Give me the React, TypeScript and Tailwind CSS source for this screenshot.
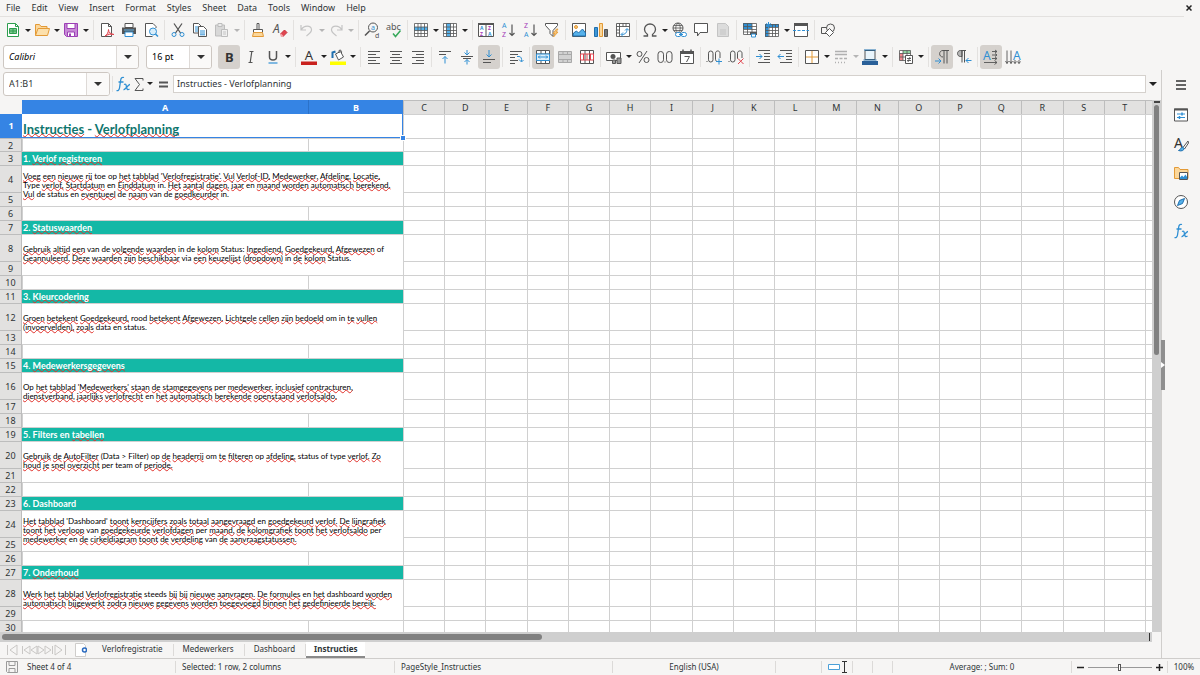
import React, { useState } from 'react';
import clsx from 'clsx';

const INK = '#555';
const BLUE = '#2f8fd3';

// All toolbar glyphs share a 16x16 canvas
const ICONS: Record<string, React.ReactNode> = {
  newDoc: (
    <>
      <path d="M2.5 1.5h8l3 3v10h-11z" fill="#fff" stroke="#2e9e4f" />
      <path d="M10.5 1.5v3h3" stroke="#2e9e4f" />
      <path d="M4.5 6.5h7v5h-7zM4.5 9h7M8 6.5v5" fill="#7cc98f" stroke="#2e9e4f" />
    </>
  ),
  open: (
    <>
      <path d="M1.5 13.5v-11h4l1.5 2h6v2" fill="#fbd79b" stroke="#e39a36" />
      <path d="M1.5 13.5l2.5-7h11.5l-2 7z" fill="#fce0ac" stroke="#e39a36" />
    </>
  ),
  save: (
    <>
      <path d="M1.5 1.5h13v13h-11l-2-2z" fill="#c78ad6" stroke="#9c3fb5" />
      <path d="M4 1.5h8v5H4z" fill="#fff" stroke="#9c3fb5" />
      <path d="M4.5 10h7v4.5h-7z" fill="#fff" stroke="#9c3fb5" />
      <path d="M6 11.5h2v3H6z" fill="#9c3fb5" />
    </>
  ),
  pdf: (
    <>
      <path d="M2.5 1.5h7l3 3v10h-10z" fill="#fff" stroke={INK} />
      <path d="M9.5 1.5v3h3" stroke={INK} />
      <path d="M6 14c2-1 3.5-4 3.5-6.5 0 3 2.500 5 5.500 5-3-1-6 0-9 1.500z" fill="#f6c5c8" stroke="#e0454f" />
    </>
  ),
  print: (
    <>
      <path d="M4 1.500h8v4H4z" fill="#fff" stroke={INK} />
      <path d="M1 5.500h14v6.500H1z" fill={INK} />
      <path d="M3 8h10" stroke="#5fb3ea" />
      <path d="M4 10h8v4.500H4z" fill="#fff" stroke={BLUE} />
    </>
  ),
  preview: (
    <>
      <path d="M13 6V4.500l-3-3H2.500v13h7" fill="#fff" stroke={INK} />
      <circle cx="10" cy="9.500" r="3.500" fill="#d8edfa" stroke={BLUE} />
      <path d="M12.500 12l2.500 2.500" stroke={BLUE} strokeWidth="1.500" />
    </>
  ),
  cut: (
    <>
      <path d="M4 1.500l6.500 9.500M12 1.500L5.500 11" stroke={INK} strokeWidth="1.300" />
      <circle cx="4" cy="12.500" r="2" stroke={BLUE} />
      <circle cx="12" cy="12.500" r="2" stroke={BLUE} />
    </>
  ),
  copy: (
    <>
      <path d="M1.500 1.500h5l2.500 2.500v7h-7.500z" fill="#fff" stroke={INK} />
      <path d="M3 5h3M3 7h3M3 9h3" stroke={BLUE} />
      <path d="M6.500 4.500h5l3 3v7h-8z" fill="#fff" stroke={INK} />
      <path d="M8 9h5M8 11h5M8 12.800h5" stroke={BLUE} />
    </>
  ),
  paste: (
    <>
      <path d="M1.500 3h9v11h-9z" fill="#d8d8d8" stroke="#bdbdbd" />
      <path d="M4 1.500h4v3H4z" fill="#ececec" stroke="#bdbdbd" />
      <path d="M7.500 7.500h6v7h-6z" fill="#f0f0f0" stroke="#bdbdbd" />
      <path d="M9 10h3M9 12h3" stroke="#c4c4c4" />
    </>
  ),
  clone: (
    <>
      <path d="M7 1.500h2v6H7z" fill="#fff" stroke={INK} />
      <path d="M3.500 7.500h9v3h-9z" fill="#fff" stroke={INK} />
      <path d="M3.500 10.500h9l1 4h-11z" fill="#fbd79b" stroke="#e39a36" />
    </>
  ),
  clear: (
    <>
      <text x="1" y="11" fontSize="12" fontStyle="italic" fill={INK} stroke="none">A</text>
      <path d="M8.500 12l4-4 2.500 2.500-4 4z" fill="#e0454f" stroke="#c9303b" />
      <path d="M8 12.500l1-1 2.500 2.500-1 1H9z" fill="#f5a6ab" />
    </>
  ),
  undo: <path d="M2 3v5h5M2.500 7.500C5 3 12 3 12.500 7.500c.3 3-3 4.500-5 6.500" stroke="#c4c4c4" strokeWidth="1.200" />,
  redo: <path d="M14 3v5H9M13.500 7.500C11 3 4 3 3.500 7.500c-.3 3 3 4.500 5 6.500" stroke="#c4c4c4" strokeWidth="1.200" />,
  find: (
    <>
      <circle cx="9" cy="5.500" r="4.500" stroke={INK} />
      <path d="M5.500 9L1 13.500" stroke={INK} strokeWidth="1.600" />
      <text x="7" y="8" fontSize="7" fill={BLUE} stroke="none">a</text>
      <text x="11" y="15.500" fontSize="7" fill={INK} stroke="none">d</text>
    </>
  ),
  spell: (
    <>
      <text x="0" y="8" fontSize="9" fill={INK} stroke="none">abc</text>
      <path d="M7 11.500l2.500 3 5-6" stroke="#37a95b" strokeWidth="1.500" />
    </>
  ),
  rowIns: (
    <>
      <path d="M1.500 1.500h13v13h-13z" fill="#fff" />
      <path d="M1 5h14v3.500H1z" fill="#56b1ea" />
      <path d="M1.500 1.500h13v13h-13zM1.500 5h13M1.500 8.500h13M1.500 11.500h13M5 1.500v13M8 1.500v13M11.500 1.500v13" stroke={INK} strokeWidth=".8" />
    </>
  ),
  colIns: (
    <>
      <path d="M1.500 1.500h13v13h-13z" fill="#fff" />
      <path d="M4.500 1h4v14h-4z" fill="#56b1ea" />
      <path d="M1.500 1.500h13v13h-13zM1.500 5h13M1.500 8.500h13M1.500 11.500h13M4.500 1.500v13M8.500 1.500v13M11.500 1.500v13" stroke={INK} strokeWidth=".8" />
    </>
  ),
  sort: (
    <>
      <path d="M.5 1.500h15v13H.5zM8 2v12" fill="#fff" stroke={INK} />
      <path d="M0 1h16v2H0z" fill={INK} />
      <text x="2" y="8" fontSize="5" fontWeight="700" fill={BLUE} stroke="none">A</text>
      <text x="2" y="14" fontSize="5" fontWeight="700" fill="#a33bb8" stroke="none">Z</text>
      <text x="10" y="8" fontSize="5" fontWeight="700" fill="#a33bb8" stroke="none">Z</text>
      <text x="10" y="14" fontSize="5" fontWeight="700" fill={BLUE} stroke="none">A</text>
    </>
  ),
  sortAsc: (
    <>
      <text x="2" y="6" fontSize="7" fill={BLUE} stroke="none">A</text>
      <text x="2" y="15" fontSize="7" fill="#a33bb8" stroke="none">Z</text>
      <path d="M12 2.500v11M9.500 11l2.500 2.500 2.500-2.500" stroke={INK} strokeWidth="1.200" />
    </>
  ),
  sortDesc: (
    <>
      <text x="2" y="6" fontSize="7" fill="#a33bb8" stroke="none">Z</text>
      <text x="2" y="15" fontSize="7" fill={BLUE} stroke="none">A</text>
      <path d="M12 2.500v11M9.500 11l2.500 2.500 2.500-2.500" stroke={INK} strokeWidth="1.200" />
    </>
  ),
  filter: (
    <>
      <path d="M1.500 1.500h12v2L9 8.500v6l-3-3v-3l-4.500-5z" fill="#fff" stroke={INK} />
      <path d="M12.500 7L9 11.500h2L9.500 15l4.500-5h-2l2-3z" fill="#fbc77a" stroke="#e39a36" strokeWidth=".8" />
    </>
  ),
  image: (
    <>
      <path d="M1.500 1.500h13v13h-13z" fill="#fff" stroke={INK} />
      <circle cx="5" cy="5" r="1.500" fill="#fbc77a" stroke="#e39a36" />
      <path d="M2 14l.5-3 3-2 2 2 4-4 3 4v3z" fill="#56b1ea" stroke="#1f6fae" />
    </>
  ),
  chart: (
    <>
      <path d="M1.500 5.500h3v9h-3z" fill="#3f97d6" stroke="#1f6fae" />
      <path d="M6.500 1.500h3v13h-3z" fill="#fbd79b" stroke="#e39a36" />
      <path d="M11.500 7.500h3v7h-3z" fill="#777" stroke={INK} />
    </>
  ),
  pivot: (
    <>
      <path d="M1.500 1.500h13v13h-13zM1.500 4.500h13M4.500 1.500v13M4.500 8H1.500M1.500 11h3M8 1.500v3M11 1.500v3" fill="#fff" stroke={INK} strokeWidth=".9" />
      <path d="M6.500 12.500c4 0 5.500-2 5.500-5.500M10 8.500L12 6.500l2 2M8 10.500l-2 2 2 2" stroke={BLUE} />
    </>
  ),
  omega: <path d="M1.500 14h4v-1.500C3.500 11 2.500 9.500 2.500 7.500 2.500 4 5 2 8 2s5.500 2 5.500 5.500c0 2-1 3.500-3 5V14h4" stroke={INK} strokeWidth="1.300" />,
  link: (
    <>
      <circle cx="7" cy="6" r="5" stroke={INK} />
      <path d="M2 6h10M7 1c-3 3-3 7 0 10M7 1c3 3 3 7 0 10M3 3.500h8M3 8.500h8" stroke={INK} strokeWidth=".8" />
      <rect x="4.500" y="10.500" width="5.500" height="4" rx="2" fill="#fff" stroke={BLUE} />
      <rect x="10" y="10.500" width="5.500" height="4" rx="2" fill="#fff" stroke={BLUE} />
      <path d="M8 12.500h4" stroke={BLUE} />
    </>
  ),
  comment: <path d="M1.500 1.500h13v9H7L4.500 14v-3.500h-3z" fill="#fff" stroke={INK} />,
  header: (
    <>
      <path d="M2.500 1.500h8l3 3v10h-11z" fill="#dcdcdc" stroke="#c4c4c4" />
      <path d="M5 8h6M5 10h6M5 12h6" stroke="#c4c4c4" />
    </>
  ),
  printArea: (
    <>
      <path d="M1.500 1.500h13v11h-13z" fill="#fff" />
      <path d="M1 1h9v6H1z" fill="#2f8fd3" />
      <path d="M1.500 1.500h13v11h-13zM1.500 4.500h13M1.500 7.500h13M1.500 10h13M5.500 1.500v11M10 1.500v11" stroke={INK} strokeWidth=".8" />
      <path d="M8 10h7v3H8z" fill={INK} />
      <path d="M9.500 12h4v3h-4z" fill="#fff" stroke={BLUE} />
    </>
  ),
  freeze: (
    <>
      <path d="M1.500 2.500h13v12h-13z" fill="#fff" />
      <path d="M1 2h14v3H1zM1 2h3.500v13H1z" fill="#2f8fd3" />
      <path d="M1.500 2.500h13v12h-13zM1.500 5.500h13M1.500 8.500h13M1.500 11.500h13M5 2.500v12M8.500 2.500v12M11.500 2.500v12" stroke={INK} strokeWidth=".8" />
      <path d="M4.500 0v6M2 1.500l5 3M7 1.500l-5 3" stroke={BLUE} />
    </>
  ),
  split: (
    <>
      <path d="M1.500 1.500h13v13h-13z" fill="#fff" stroke={INK} />
      <path d="M1 1h14v3H1z" fill={INK} />
      <path d="M0 8.500h16" stroke={BLUE} strokeDasharray="3 1.500" />
    </>
  ),
  shapes: (
    <>
      <path d="M1.500 5.500h7v6h-7z" stroke={INK} />
      <circle cx="10.500" cy="6" r="4" fill="#f6f5f4" stroke={INK} />
      <path d="M9.500 6.500L13.500 10.500l-4 4-4-4z" fill="#fff" stroke={INK} />
    </>
  ),
  bold: <text x="4" y="13" fontSize="13" fontWeight="700" fill="#333" stroke="none">B</text>,
  italic: <path d="M6.500 2.500h4M5.500 13.500h4M8.800 2.500l-1.600 11" stroke={INK} strokeWidth="1.200" />,
  underline: (
    <>
      <path d="M4.500 2v6c0 4 7 4 7 0V2" stroke={INK} strokeWidth="1.500" />
      <path d="M3.500 14h9" stroke={BLUE} strokeWidth="1.200" />
    </>
  ),
  fontColor: (
    <>
      <text x="8" y="11" fontSize="13" textAnchor="middle" fill="#333" stroke="none">A</text>
      <path d="M0 12.500h16v3.500H0z" fill="#c9211e" />
    </>
  ),
  fillColor: (
    <>
      <path d="M2.500 9V3.500l3-1" stroke="#1f6fae" strokeWidth="2" />
      <path d="M5.500 5l5-2.500 3 5.500-5 3zM9 4V1.500c1.500-1 3 0 2.500 2.500" fill="#fff" stroke={INK} />
      <path d="M0 12.500h16v3.500H0z" fill="#ffff00" />
    </>
  ),
  left: <path d="M2 2.500h12M2 5.500h8M2 8.500h12M2 11.500h8M2 14.500h12" stroke={INK} />,
  center: <path d="M2 2.500h12M4 5.500h8M2 8.500h12M4 11.500h8M2 14.500h12" stroke={INK} />,
  right: <path d="M2 2.500h12M6 5.500h8M2 8.500h12M6 11.500h8M2 14.500h12" stroke={INK} />,
  alignTop: (
    <>
      <path d="M2 2.500h12M2 5.500h7" stroke={INK} />
      <path d="M8 14.500v-7M5.500 10L8 7.500l2.500 2.500" stroke={BLUE} />
    </>
  ),
  alignMid: (
    <>
      <path d="M2 7.500h12M4 9.500h8" stroke={INK} />
      <path d="M8 1v5M5.500 3.500L8 6l2.500-2.500M8 15.500v-5M5.500 13L8 10.500l2.500 2.500" stroke={BLUE} />
    </>
  ),
  alignBottom: (
    <>
      <path d="M2 10.500h12M2 13.500h8" stroke={INK} />
      <path d="M8 1v7M5.500 5.500L8 8l2.500-2.500" stroke={BLUE} />
    </>
  ),
  wrap: (
    <>
      <path d="M2 2.500h12M2 5.500h8M2 8.500h5M2 11.500h8M2 14.500h5" stroke={INK} />
      <path d="M9 7.500h2c2 0 3 2 2.500 5M11 10.500l2.500 2.500L15.500 11" stroke={BLUE} />
    </>
  ),
  merge: (
    <>
      <path d="M1.500 1.500h13v13h-13zM1.500 5h13M1.500 11.500h13M6 1.500V5M10.500 1.500V5M6 11.500v3M10.500 11.500v3" fill="#fff" stroke={INK} />
      <path d="M1.500 5h13v6.500h-13zM3 8h10M5 6.500L3.500 8 5 9.500M11 6.500L12.500 8 11 9.500" fill="#dceffb" stroke={BLUE} />
    </>
  ),
  mergeOff: <path d="M1.500 2.500h13v11h-13zM1.500 5.500h13M1.500 10.500h13M6 2.500v3M10.500 2.500v3M6 10.500v3M10.500 10.500v3" fill="#d2d2d2" stroke="#a9a9a9" />,
  unmerge: (
    <>
      <path d="M1.500 1.500h13v13h-13zM6 1.500v13M10.500 1.500v13" fill="#fff" stroke={INK} />
      <path d="M1.500 5h13v6h-13zM4.500 5v6M8 5v6M11.500 5v6" stroke="#e0454f" />
    </>
  ),
  currency: (
    <>
      <path d="M.5 3.500h14v8H.5z" fill="#fff" stroke={INK} />
      <circle cx="7" cy="7.500" r="2.500" fill={INK} />
      <path d="M6.500 11h3v3.500h-3zM11 9h4v5.500h-4z" fill="#999" stroke={INK} />
    </>
  ),
  percent: (
    <>
      <circle cx="4.500" cy="5" r="2.500" stroke={INK} />
      <circle cx="11.500" cy="11" r="2.500" stroke={INK} />
      <path d="M12 2L4 14" stroke={INK} />
    </>
  ),
  number: (
    <>
      <rect x="1" y="2.500" width="5.500" height="11" rx="2.700" stroke={INK} />
      <rect x="9.500" y="2.500" width="5.500" height="11" rx="2.700" stroke={INK} />
      <path d="M7.500 13h1" stroke={INK} />
    </>
  ),
  date: (
    <>
      <path d="M1.500 2.500h13v12h-13z" fill="#fff" stroke={INK} />
      <path d="M1 2h14v3H1z" fill={INK} />
      <path d="M4 .5v3M12 .5v3" stroke={INK} strokeWidth="1.500" />
      <path d="M5.500 7.500h5l-3 5.500" stroke={INK} />
    </>
  ),
  addDec: (
    <>
      <path d="M.5 12.500h1" stroke={INK} />
      <rect x="2.500" y="2" width="4.500" height="11" rx="2.200" stroke={INK} />
      <path d="M14 9V4.200c0-3-4.500-3-4.500 0v6c0 1 .5 2 1.500 2.300" stroke={INK} />
      <path d="M13 9.500v6M10 12.500h6" stroke={BLUE} />
    </>
  ),
  delDec: (
    <>
      <path d="M.5 12.500h1" stroke={INK} />
      <rect x="2.500" y="2" width="4.500" height="11" rx="2.200" stroke={INK} />
      <path d="M14 9V4.200c0-3-4.500-3-4.500 0v5.500" stroke={INK} />
      <path d="M10 9.500l5.500 5.500M15.500 9.500L10 15" stroke="#e0454f" />
    </>
  ),
  indent: (
    <>
      <path d="M3 1.500h12M9 4.500h6M9 7.500h6M9 10.500h6M3 13.500h12" stroke={INK} />
      <path d="M1 7.500h6M4.500 5L7 7.500 4.500 10" stroke={BLUE} />
    </>
  ),
  outdent: (
    <>
      <path d="M3 1.500h12M9 4.500h6M9 7.500h6M9 10.500h6M3 13.500h12" stroke={INK} />
      <path d="M7 7.500H1M3.500 5L1 7.500 3.500 10" stroke={BLUE} />
    </>
  ),
  borders: (
    <>
      <path d="M1.500 1.500h13v13h-13z" fill="#fff" stroke={INK} />
      <path d="M8 2v12M2 8h12" stroke="#e39a36" />
    </>
  ),
  borderStyle: <path d="M2 2.500h12M2 5.500h12M2 9.500h3M6.500 9.500h3M11 9.500h3M2 13.500h1M5 13.500h1M8 13.500h1M11 13.500h1" stroke="#b0b0b0" strokeWidth="1.500" />,
  borderColor: (
    <>
      <path d="M3 1.500h10v9H3z" fill="#eaf5fc" stroke={INK} />
      <path d="M2 1h12M1.500 11h13" stroke="#1f6fae" />
      <path d="M0 12h16v4H0z" fill="#2a6099" />
    </>
  ),
  condFmt: (
    <>
      <path d="M1.500 1.500h11v10h-11z" fill="#fff" />
      <path d="M5 1.500h7.500v3H5z" fill="#8fd3a0" />
      <path d="M1.500 4.500H5v7H1.500z" fill="#f0868c" />
      <path d="M1.500 1.500h11v10h-11zM1.500 4.500h11M1.500 8h11M5 1.500v10M9 1.500v10" stroke={INK} strokeWidth=".8" />
      <path d="M7.500 6.500h7v8h-7z" fill="#fff" stroke={INK} />
      <path d="M9 9.500h4M9 11.500h4M12 8l-2 5" stroke={INK} strokeWidth=".9" />
    </>
  ),
  ltr: (
    <>
      <path d="M15 1.500H9c-4.500 0-4.500 6.500 0 6.500M10 1.500v13M13 1.500v13" stroke={INK} />
      <path d="M1 12h6M4.500 9.500L7 12l-2.500 2.500" stroke={BLUE} />
    </>
  ),
  rtl: (
    <>
      <path d="M6 1.500H4.500c-4 0-4 6 0 6H6z" fill="#b5b5b5" stroke={INK} />
      <path d="M5 1.500h5M6 1.500v12M8.500 1.500v12" stroke={INK} />
      <path d="M15.500 11.500H10M12.500 9L10 11.500l2.500 2.500" stroke={BLUE} />
    </>
  ),
  textLtr: (
    <>
      <text x="0" y="10.500" fontSize="12" fill={BLUE} stroke="none">A</text>
      <path d="M9 2.500h5M12 1l2 1.500L12 4M9 6h5M12 4.500L14 6l-2 1.500M9 9.500h5M12 8l2 1.500-2 1.500M1 13.500h13M11.500 11.500l2.500 2-2.500 2" stroke={INK} strokeWidth=".9" />
    </>
  ),
  textTtb: (
    <>
      <text x="8" y="10.500" fontSize="12" fill={BLUE} stroke="none">A</text>
      <path d="M2 1.500v13M.5 12L2 14.500 3.500 12M6 1.500v13M4.500 12L6 14.500 7.500 12M10 11v3.500M8.500 12.500l1.500 2 1.500-2M14 11v3.500M12.500 12.500l1.500 2 1.500-2" stroke={INK} strokeWidth=".9" />
    </>
  ),
  fx: (
    <>
      <path d="M9 1.500C7 .8 6 2 5.700 4l-1.200 8c-.3 2-1.500 3-3 2.500M3.500 6h5" stroke={BLUE} strokeWidth="1.300" />
      <path d="M9 8.500c2-1 2 0 2.500 2.500s1 3.500 3 2M15 8.500c-2 0-4.500 5.500-6.500 5" stroke={BLUE} strokeWidth="1.300" />
    </>
  ),
  sigma: <path d="M12 4.500v-2H4l4.500 6-4.500 6h8v-2" stroke={INK} />,
  equals: <path d="M4 6.500h9M4 10.500h9" stroke={INK} strokeWidth="2" />,
  menu: <path d="M3 4h10M3 8h10M3 12h10" stroke="#333" strokeWidth="1.500" />,
  props: (
    <>
      <path d="M1.500 2h13v12h-13z" fill="#fff" stroke={INK} />
      <path d="M1 1.500h14v2H1z" fill={INK} />
      <path d="M4 7h8M4 10.500h8" stroke={BLUE} />
      <path d="M9 5.500v3M6.500 9v3" stroke={BLUE} strokeWidth="1.500" />
    </>
  ),
  styles: (
    <>
      <text x="1" y="12" fontSize="14" fill="#333" stroke="none">A</text>
      <path d="M15 5l-5 6.500 1.500 1.500L15.500 7z" fill="#fff" stroke={INK} />
      <path d="M9.500 11c-2 0-1.500 3-4 3.500 3 1 5.500 0 5.500-2z" fill="#56b1ea" stroke="#1f6fae" />
    </>
  ),
  gallery: (
    <>
      <path d="M1.500 13.500v-11h4l1.500 2h8v9z" fill="#fbd79b" stroke="#e39a36" />
      <path d="M6.500 7.500h8v7h-8z" fill="#fff" stroke={INK} />
      <path d="M7 14v-1.500l2-2 1.500 1.500 2-2.500L14 12v2z" fill="#2f8fd3" />
    </>
  ),
  navigator: (
    <>
      <circle cx="8" cy="8" r="6.500" fill="#fff" stroke={INK} />
      <path d="M11.500 4.500L9.500 9.500l-5 2 2-5z" fill="#56b1ea" stroke="#1f6fae" />
    </>
  ),
  modified: (
    <>
      <path d="M2.500 2.500h11v11h-10l-1-1z" stroke="#9a9a9a" />
      <path d="M5 2.500h6v4H5zM5 9.500h6v4H5z" stroke="#9a9a9a" />
    </>
  ),
};

function Icon({ name }: { name: string }) {
  return (
    <svg viewBox="0 0 16 16" className="size-4 shrink-0 overflow-visible" fill="none" aria-hidden="true">
      {ICONS[name]}
    </svg>
  );
}

function Caret({ faded }: { faded?: boolean }) {
  return (
    <svg viewBox="0 0 8 4" className="h-[3px] w-[6px]" aria-hidden="true">
      <path d="M0 0h8L4 4z" fill={faded ? '#b5b5b5' : '#222'} />
    </svg>
  );
}

type Tool = { icon: string; label: string; menu?: boolean; disabled?: boolean };

const STANDARD: Tool[][] = [
  [
    { icon: 'newDoc', label: 'New', menu: true },
    { icon: 'open', label: 'Open', menu: true },
    { icon: 'save', label: 'Save', menu: true },
  ],
  [
    { icon: 'pdf', label: 'Export as PDF' },
    { icon: 'print', label: 'Print' },
    { icon: 'preview', label: 'Print Preview' },
  ],
  [
    { icon: 'cut', label: 'Cut' },
    { icon: 'copy', label: 'Copy' },
    { icon: 'paste', label: 'Paste', menu: true, disabled: true },
  ],
  [
    { icon: 'clone', label: 'Clone Formatting' },
    { icon: 'clear', label: 'Clear Formatting' },
  ],
  [
    { icon: 'undo', label: 'Undo', menu: true, disabled: true },
    { icon: 'redo', label: 'Redo', menu: true, disabled: true },
  ],
  [
    { icon: 'find', label: 'Find and Replace' },
    { icon: 'spell', label: 'Spelling' },
  ],
  [
    { icon: 'rowIns', label: 'Row', menu: true },
    { icon: 'colIns', label: 'Column', menu: true },
  ],
  [
    { icon: 'sort', label: 'Sort' },
    { icon: 'sortAsc', label: 'Sort Ascending' },
    { icon: 'sortDesc', label: 'Sort Descending' },
    { icon: 'filter', label: 'AutoFilter' },
  ],
  [
    { icon: 'image', label: 'Insert Image' },
    { icon: 'chart', label: 'Insert Chart' },
    { icon: 'pivot', label: 'Pivot Table' },
  ],
  [
    { icon: 'omega', label: 'Special Character', menu: true },
    { icon: 'link', label: 'Hyperlink' },
    { icon: 'comment', label: 'Comment' },
    { icon: 'header', label: 'Headers and Footers', disabled: true },
  ],
  [
    { icon: 'printArea', label: 'Print Area' },
    { icon: 'freeze', label: 'Freeze', menu: true },
    { icon: 'split', label: 'Split Window' },
  ],
  [{ icon: 'shapes', label: 'Draw Functions' }],
];

const FORMATTING: Tool[][] = [
  [
    { icon: 'bold', label: 'Bold' },
    { icon: 'italic', label: 'Italic' },
    { icon: 'underline', label: 'Underline', menu: true },
  ],
  [
    { icon: 'fontColor', label: 'Font Color', menu: true },
    { icon: 'fillColor', label: 'Background Color', menu: true },
  ],
  [
    { icon: 'left', label: 'Align Left' },
    { icon: 'center', label: 'Align Center' },
    { icon: 'right', label: 'Align Right' },
  ],
  [
    { icon: 'alignTop', label: 'Align Top' },
    { icon: 'alignMid', label: 'Center Vertically' },
    { icon: 'alignBottom', label: 'Align Bottom' },
  ],
  [{ icon: 'wrap', label: 'Wrap Text' }],
  [
    { icon: 'merge', label: 'Merge and Center' },
    { icon: 'mergeOff', label: 'Merge Cells', disabled: true },
    { icon: 'unmerge', label: 'Unmerge Cells' },
  ],
  [
    { icon: 'currency', label: 'Currency', menu: true },
    { icon: 'percent', label: 'Percent' },
    { icon: 'number', label: 'Number' },
    { icon: 'date', label: 'Date' },
  ],
  [
    { icon: 'addDec', label: 'Add Decimal Place' },
    { icon: 'delDec', label: 'Delete Decimal Place' },
  ],
  [
    { icon: 'indent', label: 'Increase Indent' },
    { icon: 'outdent', label: 'Decrease Indent' },
  ],
  [
    { icon: 'borders', label: 'Borders', menu: true },
    { icon: 'borderStyle', label: 'Border Style', menu: true, disabled: true },
    { icon: 'borderColor', label: 'Border Color', menu: true },
  ],
  [{ icon: 'condFmt', label: 'Conditional', menu: true }],
  [
    { icon: 'ltr', label: 'Left-To-Right' },
    { icon: 'rtl', label: 'Right-To-Left' },
  ],
  [
    { icon: 'textLtr', label: 'Text direction from left to right' },
    { icon: 'textTtb', label: 'Text direction from top to bottom' },
  ],
];

const MENUS = ['File', 'Edit', 'View', 'Insert', 'Format', 'Styles', 'Sheet', 'Data', 'Tools', 'Window', 'Help'];
const SHEETS = ['Verlofregistratie', 'Medewerkers', 'Dashboard', 'Instructies'];
const COLUMNS = 'CDEFGHIJKLMNOPQRST'.split('');

// A leading ~ marks a word the spell checker underlines
const SECTIONS = [
  {
    title: '1. ~Verlof ~registreren',
    lines: [
      "~Voeg ~een ~nieuwe ~rij toe op ~het ~tabblad '~Verlofregistratie'. ~Vul ~Verlof-ID, ~Medewerker, ~Afdeling, ~Locatie,",
      'Type ~verlof, ~Startdatum en ~Einddatum in. ~Het ~aantal ~dagen, ~jaar en ~maand ~worden ~automatisch ~berekend.',
      '~Vul de status en ~eventueel de ~naam van de ~goedkeurder in.',
    ],
  },
  {
    title: '2. ~Statuswaarden',
    lines: [
      '~Gebruik ~altijd ~een van de ~volgende ~waarden in de ~kolom Status: ~Ingediend, ~Goedgekeurd, ~Afgewezen of',
      '~Geannuleerd. ~Deze ~waarden ~zijn ~beschikbaar via ~een ~keuzelijst (~dropdown) in ~de ~kolom Status.',
    ],
  },
  {
    title: '3. ~Kleurcodering',
    lines: [
      '~Groen ~betekent ~Goedgekeurd, rood ~betekent ~Afgewezen. ~Lichtgele ~cellen ~zijn ~bedoeld om in ~te ~vullen',
      '(~invoervelden), ~zoals data en status.',
    ],
  },
  {
    title: '4. ~Medewerkersgegevens',
    lines: [
      "Op ~het ~tabblad '~Medewerkers' ~staan ~de ~stamgegevens per ~medewerker, ~inclusief ~contracturen,",
      '~dienstverband, ~jaarlijks ~verlofrecht en ~het ~automatisch ~berekende ~openstaand ~verlofsaldo.',
    ],
  },
  {
    title: '5. Filters en ~tabellen',
    lines: [
      '~Gebruik ~de ~AutoFilter (Data > Filter) op ~de ~headerrij om ~te ~filteren op ~afdeling, status of type ~verlof. ~Zo',
      '~houd ~je ~snel ~overzicht per team of ~periode.',
    ],
  },
  {
    title: '6. Dashboard',
    lines: [
      "~Het ~tabblad 'Dashboard' ~toont ~kerncijfers ~zoals ~totaal ~aangevraagd en ~goedgekeurd ~verlof. ~De ~lijngrafiek",
      '~toont ~het ~verloop van ~goedgekeurde ~verlofdagen per ~maand, ~de ~kolomgrafiek ~toont ~het ~verlofsaldo per',
      '~medewerker en ~de ~cirkeldiagram ~toont ~de ~verdeling van ~de ~aanvraagstatussen.',
    ],
  },
  {
    title: '7. ~Onderhoud',
    lines: [
      '~Werk ~het ~tabblad ~Verlofregistratie steeds ~bij ~bij ~nieuwe ~aanvragen. ~De ~formules en ~het dashboard ~worden',
      '~automatisch ~bijgewerkt ~zodra ~nieuwe ~gegevens ~worden ~toegevoegd ~binnen ~het ~gedefinieerde ~bereik.',
    ],
  },
];

function Spelled({ text }: { text: string }) {
  return (
    <>
      {text.split(' ').map((word, i) => {
        const [before, marked] = word.split('~');
        return (
          <React.Fragment key={i}>
            {i > 0 && ' '}
            {before}
            {marked && (
              <span className="underline decoration-[#e0302a] decoration-wavy decoration-1 -underline-offset-1 [text-decoration-skip-ink:none]">{marked}</span>
            )}
          </React.Fragment>
        );
      })}
    </>
  );
}

function Toolbar({ groups, pressed, onToggle, label }: {
  groups: Tool[][];
  pressed: string[];
  onToggle: (icon: string) => void;
  label: string;
}) {
  return (
    <div role="toolbar" aria-label={label} className="flex items-center">
      {groups.map((group, g) => (
        <React.Fragment key={g}>
          {g > 0 && <div className="mx-[2px] h-5 w-px shrink-0 bg-[#e3e1df]" />}
          {group.map((tool) => (
            <div key={tool.icon} className={clsx('flex shrink-0 items-center', tool === group[group.length - 1] && tool.menu && 'pr-[2px]')}>
              <button
                type="button"
                title={tool.label}
                aria-label={tool.label}
                aria-pressed={pressed.includes(tool.icon)}
                disabled={tool.disabled}
                onClick={() => onToggle(tool.icon)}
                className={clsx(
                  'flex h-6 w-[22px] items-center justify-center rounded-[3px]',
                  pressed.includes(tool.icon) && 'bg-[#d5d1cd]'
                )}
              >
                <Icon name={tool.icon} />
              </button>
              {tool.menu && (
                <button type="button" aria-label={`${tool.label} options`} className="flex h-6 w-[7px] items-center justify-center">
                  <Caret faded={tool.disabled} />
                </button>
              )}
            </div>
          ))}
        </React.Fragment>
      ))}
    </div>
  );
}

function Combo({ label, value, className }: { label: string; value: string; className: string }) {
  return (
    <div className={clsx('relative h-6 shrink-0 rounded-[3px] border border-[#cdc7c2] bg-white', className)}>
      <select aria-label={label} defaultValue={value} className="h-full w-full appearance-none bg-transparent pl-[5px] text-black outline-none">
        <option>{value}</option>
      </select>
      <span className="pointer-events-none absolute inset-y-0 right-0 flex w-[22px] items-center justify-center rounded-r-[3px] border-l border-[#dedad7] bg-[#faf9f8]">
        <svg viewBox="0 0 8 4" className="h-1 w-2" aria-hidden="true"><path d="M0 0h8L4 4z" fill="#333" /></svg>
      </span>
    </div>
  );
}

const GRID = 'border-t border-l border-[#d0d0d0]';
const ROW_HEAD = 'border-t border-[#bdbdbd] bg-[#e2e1e0] border-r p-0 text-center font-normal leading-none';

function EmptyCells() {
  return (
    <>
      {[...COLUMNS, 'U'].map((c) => (
        <td key={c} className={GRID} />
      ))}
    </>
  );
}

function Grid() {
  return (
    <table className="w-full table-fixed border-separate border-spacing-0 bg-white">
      <colgroup>
        <col className="w-[22px]" />
        <col className="w-[286px]" />
        <col className="w-[95px]" />
        {COLUMNS.map((c) => <col key={c} />)}
        <col className="w-[7px]" />
      </colgroup>
      <thead>
        <tr className="h-[14px] leading-none">
          <th aria-label="Select all" className="bg-[#f6f5f4] p-0" />
          <th scope="col" className="bg-[#3584e4] p-0 font-bold text-white">A</th>
          <th scope="col" className="border-l border-[#2b72c9] bg-[#3584e4] p-0 font-bold text-white">B</th>
          {COLUMNS.map((c) => (
            <th key={c} scope="col" className="border-t border-l border-[#bdbdbd] bg-[#e2e1e0] p-0 font-normal">{c}</th>
          ))}
          <th aria-label="U" className="border-t border-l border-[#bdbdbd] bg-[#e2e1e0] p-0" />
        </tr>
      </thead>
      <tbody>
        <tr className="h-6">
          <th scope="row" className="bg-[#3584e4] p-0 font-bold text-white">1</th>
          <td colSpan={2} className="relative border-r border-b border-[#3584e4] p-0 pl-px align-bottom font-[Lato,sans-serif] text-[13px] leading-[16px] font-bold whitespace-nowrap text-[#0f766e]">
            <Spelled text="~Instructies - ~Verlofplanning" />
            <span className="absolute -right-[3px] -bottom-[3px] size-1 bg-[#3584e4] outline outline-white" />
          </td>
          <EmptyCells />
        </tr>
        <tr className="h-[13px]">
          <th scope="row" className={ROW_HEAD}>2</th>
          <td className={GRID} />
          <td className={GRID} />
          <EmptyCells />
        </tr>
        {SECTIONS.map((section, i) => {
          const n = 3 + i * 4;
          return (
            <React.Fragment key={n}>
              <tr className="h-[14px]">
                <th scope="row" className={ROW_HEAD}>{n}</th>
                <td colSpan={2} className="border-t border-[#d0d0d0] bg-[#14b8a6] p-0 pl-px font-[Lato,sans-serif] text-[9px] leading-[12px] font-bold whitespace-nowrap text-white">
                  <Spelled text={section.title} />
                </td>
                <EmptyCells />
              </tr>
              <tr className="h-[27px]">
                <th scope="row" className={ROW_HEAD}>{n + 1}</th>
                <td colSpan={2} rowSpan={2} className="border-t border-[#d0d0d0] p-0 pb-0.5 pl-px font-[Lato,sans-serif] text-[8px] leading-[9px] whitespace-nowrap text-black">
                  {section.lines.map((line) => (
                    <p key={line}><Spelled text={line} /></p>
                  ))}
                </td>
                <EmptyCells />
              </tr>
              <tr className="h-[14px]">
                <th scope="row" className={ROW_HEAD}>{n + 2}</th>
                <EmptyCells />
              </tr>
              <tr className="h-[14px]">
                <th scope="row" className={ROW_HEAD}>{n + 3}</th>
                <td className={GRID} />
                <td className={GRID} />
                <EmptyCells />
              </tr>
            </React.Fragment>
          );
        })}
      </tbody>
    </table>
  );
}

function StatusSep() {
  return <div className="h-3 w-px shrink-0 bg-[#dcdad8]" />;
}

export default function App() {
  const [pressed, setPressed] = useState(['bold', 'alignBottom', 'merge', 'ltr', 'textLtr']);
  const [sheet, setSheet] = useState('Instructies');
  const [formula, setFormula] = useState('Instructies - Verlofplanning');
  const [cell, setCell] = useState('A1:B1');
  const [zoom, setZoom] = useState(50);

  const toggle = (icon: string) => {
    setPressed((prev) => (prev.includes(icon) ? prev.filter((p) => p !== icon) : [...prev, icon]));
  };

  return (
    <div className="flex h-screen flex-col overflow-hidden bg-[#f6f5f4] font-['Noto_Sans',sans-serif] text-[9px] text-[#2e3436]">
      {/* Menu bar */}
      <nav className="mr-4 flex h-[17px] shrink-0 items-center gap-[11px] border-b border-[#e3e1df] pl-1.5">
        {MENUS.map((m) => (
          <button key={m} type="button">{m}</button>
        ))}
        <button type="button" aria-label="Close document" className="-mr-2 ml-auto">
          <svg viewBox="0 0 6 6" className="size-1.5" aria-hidden="true">
            <path d="M.5.5l5 5M5.500.5l-5 5" stroke="#222" strokeWidth="1.500" />
          </svg>
        </button>
      </nav>

      {/* Toolbars */}
      <div className="flex h-[26px] shrink-0 items-center pl-0.5">
        <Toolbar label="Standard" groups={STANDARD} pressed={pressed} onToggle={toggle} />
      </div>
      <div className="flex h-[27px] shrink-0 items-center pl-[3px]">
        <Combo label="Font Name" value="Calibri" className="mr-[7px] w-[136px] italic" />
        <Combo label="Font Size" value="16 pt" className="mr-1.5 w-[66px]" />
        <Toolbar label="Formatting" groups={FORMATTING} pressed={pressed} onToggle={toggle} />
      </div>

      <div className="flex min-h-0 flex-1">
        <main className="flex min-w-0 flex-1 flex-col">
          {/* Formula bar */}
          <div className="flex h-[30px] shrink-0 items-center pr-1 pb-[3px] pl-[3px]">
            <div className="flex h-6 w-[107px] shrink-0 overflow-hidden rounded-[3px] border border-[#cdc7c2] bg-white">
              <input aria-label="Name Box" value={cell} onChange={(e) => setCell(e.target.value)} className="w-0 flex-1 pl-[5px] outline-none" />
              <button type="button" aria-label="Open name list" className="flex w-[23px] items-center justify-center border-l border-[#dedad7] bg-[#faf9f8]">
                <svg viewBox="0 0 8 4" className="h-1 w-2" aria-hidden="true"><path d="M0 0h8L4 4z" fill="#333" /></svg>
              </button>
            </div>
            <div className="mx-[2px] h-4 w-px bg-[#e3e1df]" />
            <button type="button" aria-label="Function Wizard"><Icon name="fx" /></button>
            <button type="button" aria-label="Select Function" className="flex items-center">
              <Icon name="sigma" />
              <Caret />
            </button>
            <button type="button" aria-label="Formula" className="mx-0.5"><Icon name="equals" /></button>
            <input
              aria-label="Formula input"
              value={formula}
              onChange={(e) => setFormula(e.target.value)}
              className="h-[18px] min-w-0 flex-1 border border-[#d5d1cd] bg-white pl-[3px] outline-none"
            />
            <button type="button" aria-label="Expand formula bar" className="ml-[3px]">
              <svg viewBox="0 0 8 4" className="h-1 w-2" aria-hidden="true"><path d="M0 0h8L4 4z" fill="#222" /></svg>
            </button>
          </div>

          {/* Sheet with scrollbars */}
          <div className="flex min-h-0 flex-1">
            <div className="min-w-0 flex-1 overflow-hidden">
              <Grid />
            </div>
            <div className="flex w-[9px] shrink-0 flex-col items-center bg-[#cfcfcf]">
              <div className="mt-px h-0.5 w-1.5 bg-[#444]" />
              <div className="mt-0.5 h-[47%] w-[5px] rounded-full bg-[#808080]" />
            </div>
          </div>
          <div className="mr-[9px] flex h-[10px] shrink-0 items-center bg-[#cfcfcf] pr-0.5 pl-0.5">
            <div className="h-1.5 w-[47%] rounded-full bg-[#808080]" />
            <div className="ml-auto h-2 w-px bg-[#333]" />
          </div>

          {/* Sheet tabs */}
          <div className="flex h-4 shrink-0 items-stretch text-[8px]">
            <svg viewBox="0 0 62 14" className="mt-px ml-1.5 h-[14px] w-[62px] shrink-0" fill="none" stroke="#c9c7c5" aria-hidden="true">
              <path d="M1.500 2v10M11 2L4 7l7 5zM16.500 3v8M24 3l-6 4 6 4zM31 3l-6 4 6 4zM32 3l6 4-6 4zM39 3l6 4-6 4zM46.500 3v8M49 2l7 5-7 5zM59.500 2v10" />
            </svg>
            <button type="button" aria-label="Add Sheet" className="mr-[6px] ml-[7px]">
              <svg viewBox="0 0 12 14" className="h-[14px] w-3" aria-hidden="true">
                <path d="M.5.5h8l2 2v11H.5z" fill="#fff" stroke="#cfcdcb" />
                <circle cx="9.500" cy="7" r="2" fill="#fff" stroke="#2a6bc0" strokeWidth="1.500" />
              </svg>
            </button>
            {SHEETS.map((s) => (
              <div key={s} className="flex items-center">
                <button
                  type="button"
                  onClick={() => setSheet(s)}
                  className={clsx(
                    'h-full border-b-2',
                    sheet === s ? 'border-[#8a8a8a] bg-white px-2 font-bold' : 'border-transparent pr-[10px] pl-[9px]'
                  )}
                >
                  {s}
                </button>
                {sheet !== s && <StatusSep />}
              </div>
            ))}
          </div>
        </main>

        {/* Sidebar deck */}
        <aside className="relative flex w-[39px] shrink-0 flex-col items-center border-l border-[#d0cecc] pt-[6px]">
          {[
            ['menu', 'Sidebar Settings'],
            ['props', 'Properties'],
            ['styles', 'Styles'],
            ['gallery', 'Gallery'],
            ['navigator', 'Navigator'],
            ['fx', 'Functions'],
          ].map(([icon, label]) => (
            <button key={icon} type="button" aria-label={label} title={label} className={clsx('flex w-full shrink-0 items-center justify-center', icon === 'menu' ? 'mb-[7px] h-[17px]' : 'h-[29px]')}>
              <Icon name={icon} />
            </button>
          ))}
          <button type="button" aria-label="Hide sidebar" className="absolute top-[46%] -left-px flex h-[50px] w-1 items-center justify-center bg-[#8f8f8f]">
            <svg viewBox="0 0 4 6" className="h-1.5 w-1" aria-hidden="true"><path d="M0 0l4 3-4 3z" fill="#fff" /></svg>
          </button>
        </aside>
      </div>

      {/* Status bar */}
      <footer className="flex h-[17px] shrink-0 items-center border-t border-[#cfcdcb] text-[8px]">
        <div className="flex w-[175px] shrink-0 items-center gap-[7px] pl-1">
          <Icon name="modified" />
          <span>Sheet 4 of 4</span>
        </div>
        <StatusSep />
        <span className="w-[218px] shrink-0 pl-1.5">Selected: 1 row, 2 columns</span>
        <StatusSep />
        <span className="w-[217px] shrink-0 pl-1.5">PageStyle_Instructies</span>
        <StatusSep />
        <span className="min-w-0 flex-1 text-center">English (USA)</span>
        <StatusSep />
        <span className="w-[45px] shrink-0" />
        <StatusSep />
        <svg viewBox="0 0 30 14" className="h-[14px] w-[30px] shrink-0" fill="none" aria-hidden="true">
          <path d="M6.500 4.500h11v5h-11z" fill="#fff" stroke="#4ba0d8" />
          <path d="M20 1.500h5M22.500 1.500v11M20 12.500h5" stroke="#333" />
        </svg>
        <StatusSep />
        <span className="w-[19px] shrink-0" />
        <StatusSep />
        <span className="w-[19px] shrink-0" />
        <StatusSep />
        <span className="w-[178px] shrink-0 text-center">Average: ; Sum: 0</span>
        <StatusSep />
        <div className="flex w-[95px] shrink-0 items-center justify-center gap-1">
          <button type="button" aria-label="Zoom out" onClick={() => setZoom(Math.max(0, zoom - 5))}>
            <svg viewBox="0 0 7 7" className="size-[7px]" aria-hidden="true"><path d="M0 3.500h7" stroke="#222" strokeWidth="1.500" /></svg>
          </button>
          <input
            type="range"
            aria-label="Zoom"
            value={zoom}
            onChange={(e) => setZoom(Number(e.target.value))}
            className="h-2 w-[64px] appearance-none bg-[linear-gradient(#999,#999)] bg-size-[100%_1px] bg-center bg-no-repeat [&::-webkit-slider-thumb]:h-[7px] [&::-webkit-slider-thumb]:w-[3px] [&::-webkit-slider-thumb]:appearance-none [&::-webkit-slider-thumb]:border [&::-webkit-slider-thumb]:border-[#555] [&::-webkit-slider-thumb]:bg-white"
          />
          <button type="button" aria-label="Zoom in" onClick={() => setZoom(Math.min(100, zoom + 5))}>
            <svg viewBox="0 0 7 7" className="size-[7px]" aria-hidden="true"><path d="M0 3.500h7M3.500 0v7" stroke="#222" strokeWidth="1.500" /></svg>
          </button>
        </div>
        <StatusSep />
        <span className="w-8 shrink-0 text-center">100%</span>
      </footer>
    </div>
  );
}
